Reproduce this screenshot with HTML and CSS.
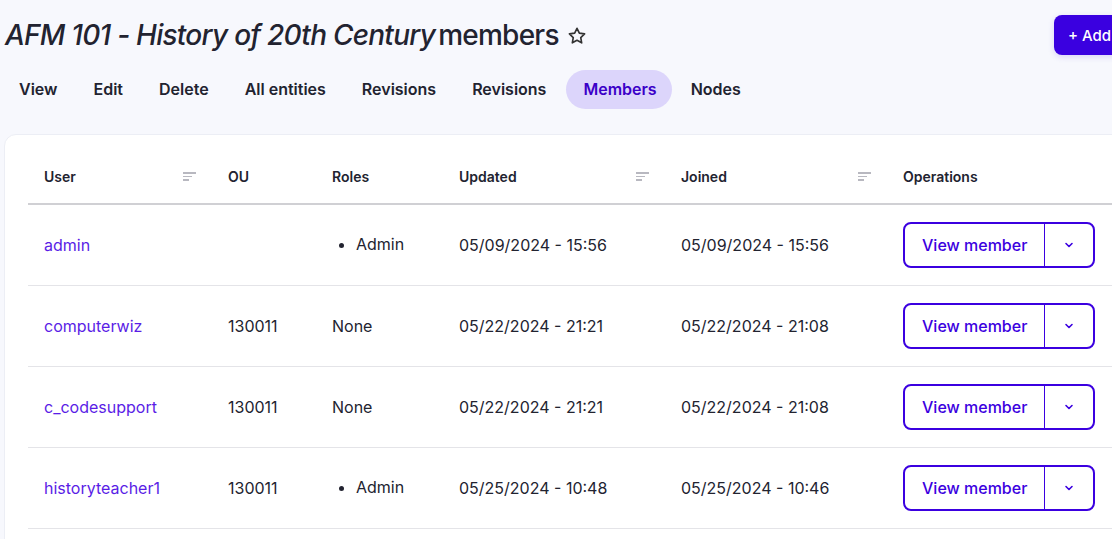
FILE: index.html
```html
<!DOCTYPE html>
<html lang="en">
<head>
<meta charset="UTF-8">
<meta name="viewport" content="width=device-width, initial-scale=1.0">
<title>AFM 101 - History of 20th Century members</title>
<link rel="stylesheet" href="styles.css">
</head>
<body>

<div class="page">
  <div class="top">
    <h1 class="title"><em>AFM 101 - History of 20th Century</em> members
      <svg class="star" width="20" height="20" viewBox="0 0 24 24" fill="none" stroke="#333" stroke-width="2" stroke-linejoin="round"><path d="M12 2.8l2.8 5.8 6.3.9-4.6 4.4 1.1 6.3L12 17.2l-5.6 3 1.1-6.3L2.9 9.5l6.3-.9z"/></svg>
    </h1>
    <button class="add">+ Add</button>
  </div>

  <nav class="tabs">
    <a>View</a>
    <a>Edit</a>
    <a>Delete</a>
    <a>All entities</a>
    <a>Revisions</a>
    <a>Revisions</a>
    <a class="active">Members</a>
    <a>Nodes</a>
  </nav>

  <div class="card">
    <table>
      <thead>
        <tr>
          <th class="c-user">User <span class="sort"><i></i><i></i><i></i></span></th>
          <th class="c-ou">OU</th>
          <th class="c-roles">Roles</th>
          <th class="c-date">Updated <span class="sort"><i></i><i></i><i></i></span></th>
          <th class="c-date">Joined <span class="sort"><i></i><i></i><i></i></span></th>
          <th class="c-ops">Operations</th>
        </tr>
      </thead>
      <tbody id="rows"></tbody>
    </table>
  </div>
</div>

<script>
const members = [
  { user: "admin", ou: "", roles: ["Admin"], updated: "05/09/2024 - 15:56", joined: "05/09/2024 - 15:56" },
  { user: "computerwiz", ou: "130011", roles: [], updated: "05/22/2024 - 21:21", joined: "05/22/2024 - 21:08" },
  { user: "c_codesupport", ou: "130011", roles: [], updated: "05/22/2024 - 21:21", joined: "05/22/2024 - 21:08" },
  { user: "historyteacher1", ou: "130011", roles: ["Admin"], updated: "05/25/2024 - 10:48", joined: "05/25/2024 - 10:46" }
];

const rows = document.getElementById("rows");
members.forEach(m => {
  const roles = m.roles.length
    ? `<ul>${m.roles.map(r => `<li>${r}</li>`).join("")}</ul>`
    : "None";
  rows.innerHTML += `
    <tr>
      <td><a class="user">${m.user}</a></td>
      <td>${m.ou}</td>
      <td>${roles}</td>
      <td>${m.updated}</td>
      <td>${m.joined}</td>
      <td>
        <div class="dropbutton">
          <a>View member</a>
          <span class="toggle">
            <svg width="12" height="8" viewBox="0 0 12 8" fill="none" stroke="#3b00e0" stroke-width="1.6" stroke-linecap="round" stroke-linejoin="round"><path d="M3 2.5l3 3 3-3"/></svg>
          </span>
        </div>
      </td>
    </tr>
  `;
});
</script>

</body>
</html>
```

FILE: styles.css
```css
body {
  margin: 0;
  font-family: Inter, "Liberation Sans", sans-serif;
  background: #f7f8fd;
  color: #222330;
  overflow: hidden;
}

.page {
  width: 1180px;
}

.top {
  display: flex;
  align-items: flex-start;
  justify-content: space-between;
  padding: 15px 0 0 5px;
  height: 45px;
}

.title {
  margin: 0;
  margin-top: 2px;
  font-size: 28px;
  font-weight: 500;
  letter-spacing: -0.75px;
  line-height: 36px;
  color: #222330;
  display: flex;
  align-items: center;
  gap: 8px;
}

.title em {
  margin-right: -5px;
}

.star {
  margin-top: 1px;
}

.add {
  width: 126px;
  height: 40px;
  border: none;
  border-radius: 8px;
  background: #3a00e0;
  color: white;
  font-family: inherit;
  font-size: 15px;
  font-weight: 500;
  text-align: left;
  padding-left: 14px;
  box-shadow: 0 2px 6px rgba(58, 0, 224, 0.15);
}

.tabs {
  display: flex;
  align-items: center;
  padding: 10px 0 0 1px;
}

.tabs a {
  padding: 0 18px;
  height: 39px;
  line-height: 39px;
  border-radius: 20px;
  font-size: 16px;
  font-weight: 600;
  color: #222330;
}

.tabs a.active {
  background: #dcd5fb;
  color: #3b00c8;
  padding: 0 15px 0 17px;
  margin: 0 1px 0 2px;
}

.card {
  margin: 25px 0 0 4px;
  background: white;
  border-radius: 12px;
  border: 1px solid #eceef5;
  padding: 15px 0 0 23px;
  height: 500px;
}

table {
  border-collapse: collapse;
  width: 1130px;
}

th {
  text-align: left;
  font-size: 14px;
  font-weight: 600;
  height: 53px;
  padding: 0 16px;
  border-bottom: 2px solid #d0d0d4;
  position: relative;
}

.c-user { width: 152px; }
.c-ou { width: 72px; }
.c-roles { width: 95px; }
.c-date { width: 190px; }

.sort {
  position: absolute;
  right: 16px;
  top: 22px;
  width: 13px;
}

.sort i {
  display: block;
  height: 1.5px;
  background: #b8b8c0;
  margin-bottom: 2.2px;
}

.sort i:nth-child(2) { width: 9px; }
.sort i:nth-child(3) { width: 6px; }

td {
  height: 80px;
  padding: 0 16px;
  font-size: 16px;
  color: #222330;
  border-bottom: 1px solid #e4e4e8;
}

.user {
  color: #5a1de6;
}

ul {
  margin: 0;
  padding-left: 24px;
  margin-top: -3px;
}

.dropbutton {
  display: inline-flex;
  height: 42px;
  border: 2px solid #3b00e0;
  border-radius: 8px;
  color: #3b00e0;
  font-weight: 500;
}

.dropbutton a {
  padding: 0 17px;
  line-height: 42px;
  border-right: 1px solid #3b00e0;
}

.dropbutton .toggle {
  width: 48px;
  display: flex;
  align-items: center;
  justify-content: center;
}
```
